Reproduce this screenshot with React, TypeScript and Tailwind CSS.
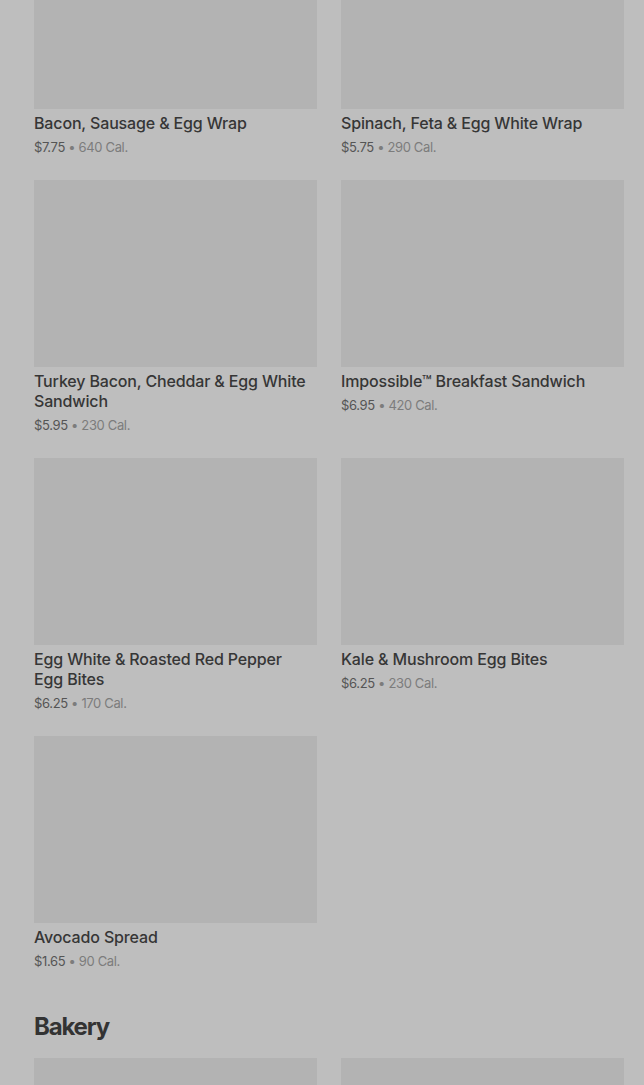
type Item = { name: string; price: string; cal: string };

const breakfast: Item[] = [
  { name: "Bacon, Sausage & Egg Wrap", price: "$7.75", cal: "640 Cal." },
  { name: "Spinach, Feta & Egg White Wrap", price: "$5.75", cal: "290 Cal." },
  { name: "Turkey Bacon, Cheddar & Egg White Sandwich", price: "$5.95", cal: "230 Cal." },
  { name: "Impossible™ Breakfast Sandwich", price: "$6.95", cal: "420 Cal." },
  { name: "Egg White & Roasted Red Pepper Egg Bites", price: "$6.25", cal: "170 Cal." },
  { name: "Kale & Mushroom Egg Bites", price: "$6.25", cal: "230 Cal." },
  { name: "Avocado Spread", price: "$1.65", cal: "90 Cal." },
];

function MenuCard({ item }: { item: Item }) {
  return (
    <div className="flex flex-col">
      <div className="h-[187px] w-full bg-[#b3b3b3]" />
      <div className="mt-[4px] pr-[6px] text-[16px] font-medium leading-5 tracking-[-0.15px] text-[#363636]">
        {item.name}
      </div>
      <div className="mt-[4px] text-[13px] leading-5 tracking-[-0.35px] text-[#555]">
        {item.price}
        <span className="text-[#7c7c7c]"> • {item.cal}</span>
      </div>
    </div>
  );
}

export default function App() {
  return (
    <div
      className="min-h-[1085px] overflow-hidden bg-[#bebebe] pl-[34px] pr-[20px]"
      style={{ fontFamily: "Inter, 'Noto Sans', sans-serif" }}
    >
      <div className="-mt-[78px] grid grid-cols-2 gap-x-6 gap-y-[23px]">
        {breakfast.map((item) => (
          <MenuCard key={item.name} item={item} />
        ))}
      </div>

      <h2 className="mt-[40px] text-[24px] font-bold leading-8 tracking-[-1.2px] text-[#333]">
        Bakery
      </h2>

      <div className="mt-[15px] grid grid-cols-2 gap-x-6">
        <div className="h-[187px] bg-[#b3b3b3]" />
        <div className="h-[187px] bg-[#b3b3b3]" />
      </div>
    </div>
  );
}
